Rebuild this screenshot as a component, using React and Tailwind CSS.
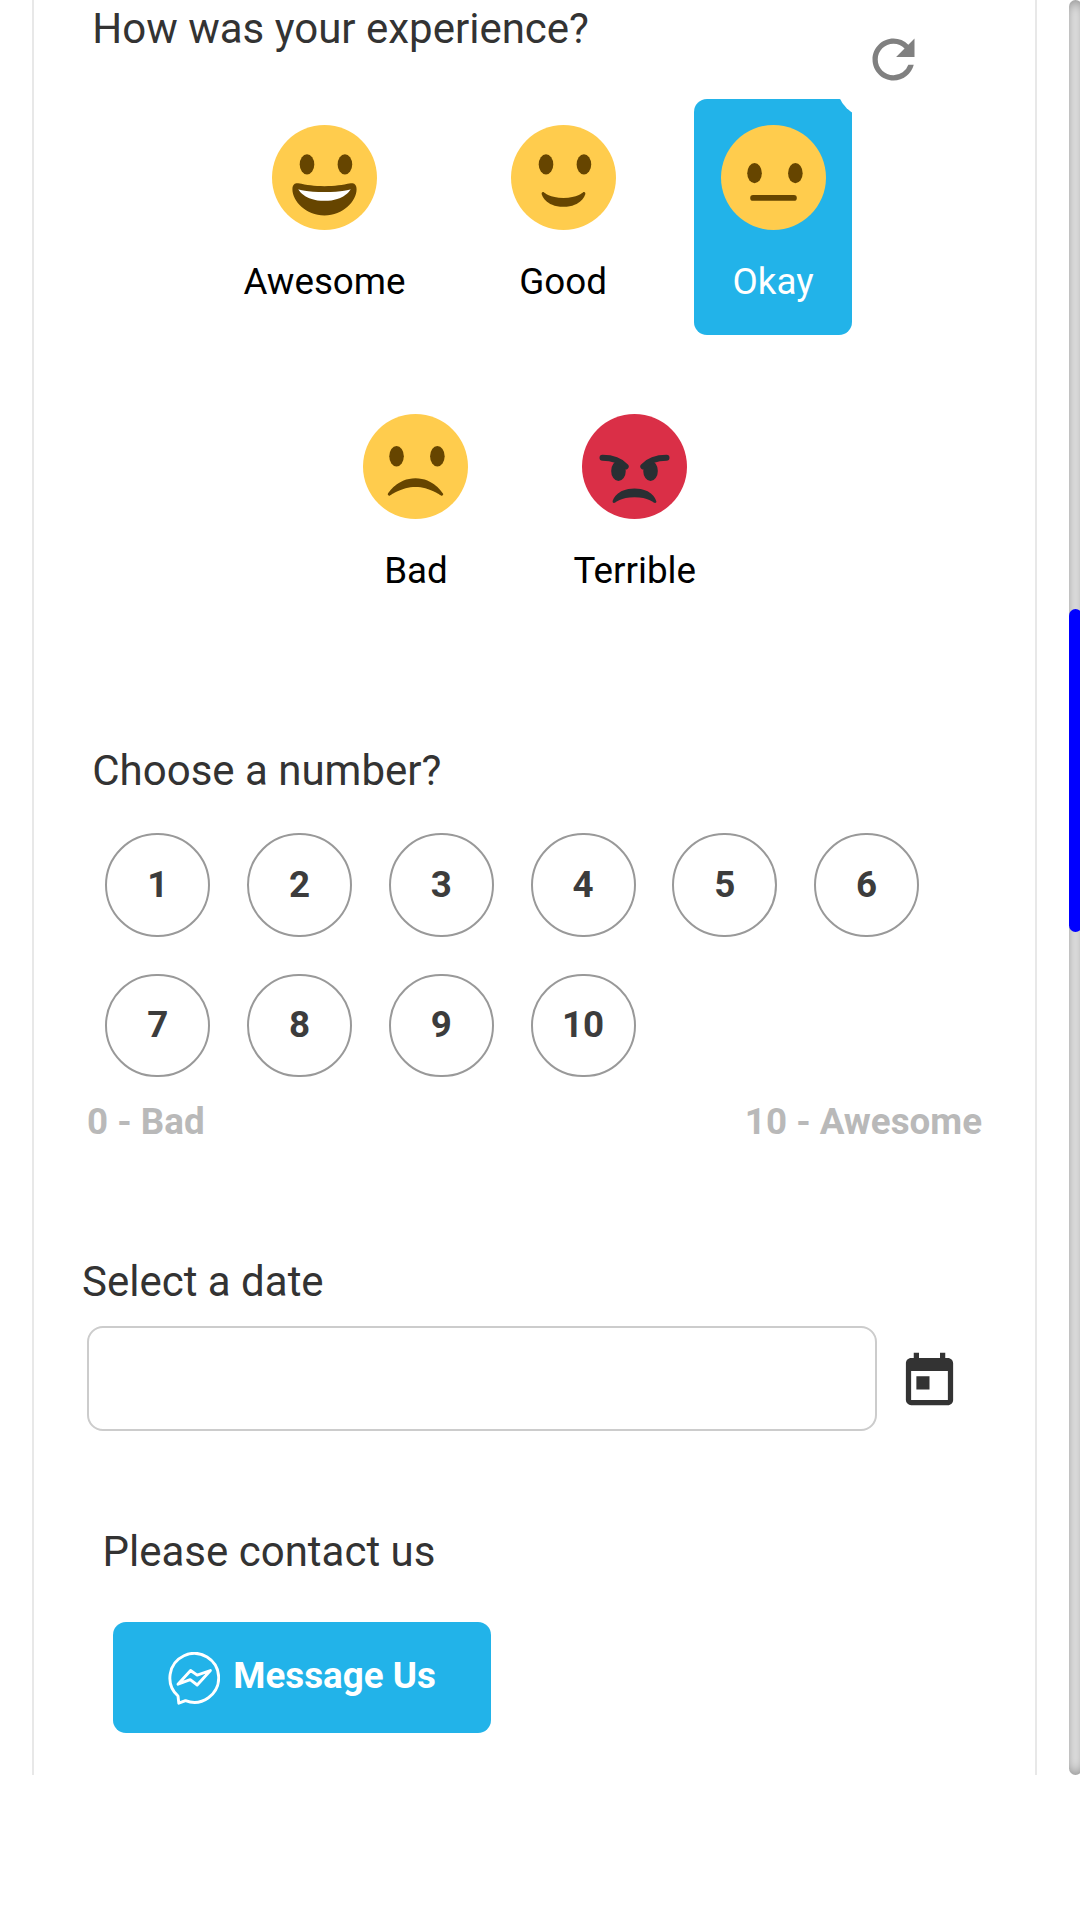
import { MdRefresh, MdToday } from "react-icons/md";

const CLASSIC_EYES = (
  <g fill="#664500">
    <ellipse cx="12" cy="13.5" rx="2.5" ry="3.5" />
    <ellipse cx="25" cy="13.5" rx="2.5" ry="3.5" />
  </g>
);

function Face({ fill = "#ffcc4d", children }) {
  return (
    <svg viewBox="0 0 36 36" className="size-[105px]">
      <circle cx="18" cy="18" r="18" fill={fill} />
      {children}
    </svg>
  );
}

const AwesomeFace = () => (
  <Face>
    {CLASSIC_EYES}
    <path
      fill="#664500"
      d="M18 21c-3.623 0-6.027-.422-9-1-.679-.131-2 0-2 2 0 4 4.595 9 11 9 6.404 0 11-5 11-9 0-2-1.321-2.132-2-2-2.973.578-5.377 1-9 1z"
    />
    <path fill="#fff" d="M9 22s3 1 9 1 9-1 9-1-2 4-9 4-9-4-9-4z" />
  </Face>
);

const GoodFace = () => (
  <Face>
    {CLASSIC_EYES}
    <path
      fill="#664500"
      d="M10.515 23.621C10.56 23.8 11.683 28 18 28c6.318 0 7.44-4.2 7.485-4.379.055-.217-.043-.442-.237-.554-.195-.111-.439-.078-.6.077C24.629 23.163 22.694 25 18 25s-6.63-1.837-6.648-1.855C11.256 23.05 11.128 23 11 23c-.084 0-.169.021-.246.064-.196.112-.294.339-.239.557z"
    />
  </Face>
);

const OkayFace = () => (
  <Face>
    <g fill="#664500">
      <ellipse cx="11.5" cy="16.5" rx="2.5" ry="3.5" />
      <ellipse cx="25.5" cy="16.5" rx="2.5" ry="3.5" />
      <rect x="10" y="24" width="16" height="2" rx="1" />
    </g>
  </Face>
);

const BadFace = () => (
  <Face>
    <g fill="#664500">
      <ellipse cx="11.5" cy="14.5" rx="2.5" ry="3.5" />
      <ellipse cx="25.5" cy="14.5" rx="2.5" ry="3.5" />
      <path d="M8.665 27.871c.178.161.444.171.635.029.039-.029 3.922-2.9 8.7-2.9 4.766 0 8.662 2.871 8.7 2.9.191.142.457.13.635-.029.177-.16.217-.424.094-.628C27.3 27.029 24.212 22 18 22s-9.301 5.028-9.429 5.243c-.123.205-.084.468.094.628z" />
    </g>
  </Face>
);

const TerribleFace = () => (
  <Face fill="#da2f47">
    <g fill="#292f33">
      <ellipse cx="12.5" cy="19.5" rx="2.5" ry="3.5" />
      <ellipse cx="23.5" cy="19.5" rx="2.5" ry="3.5" />
      <path d="M25.485 29.879C25.44 29.7 24.317 25.5 18 25.5c-6.318 0-7.44 4.2-7.485 4.379-.055.217.043.442.237.554.195.111.439.078.6-.077.019-.019 1.954-1.856 6.648-1.856s6.63 1.837 6.648 1.855c.096.095.224.145.352.145.084 0 .169-.021.246-.064.196-.112.294-.339.239-.557z" />
    </g>
    <g fill="none" stroke="#292f33" strokeWidth="2" strokeLinecap="round">
      <path d="M7 15c3 0 6.2 1 8 3" />
      <path d="M29 15c-3 0-6.2 1-8 3" />
    </g>
  </Face>
);

function Option({ face, label, selected = false }) {
  return (
    <div
      className={
        "flex h-[236px] flex-col items-center rounded-[13px] px-[26.25px] pt-[26px] text-[36.75px] leading-[44px] " +
        (selected ? "bg-[#22b3e9] text-white" : "text-black")
      }
    >
      {face}
      <span className="mt-[30px] whitespace-nowrap">{label}</span>
    </div>
  );
}

function Question({ children, className }) {
  return (
    <h2 className={"text-[42px] leading-[48px] font-normal whitespace-nowrap text-[#333] " + className}>
      {children}
    </h2>
  );
}

function MessengerIcon() {
  return (
    <svg
      viewBox="0 0 52 54"
      className="mt-[3px] h-[54px] w-[52px]"
      fill="none"
      stroke="#fff"
      strokeWidth="2.9"
      strokeLinejoin="round"
      strokeLinecap="round"
    >
      <path d="M10 44A24.4 24.4 0 1 1 17.5 48.6L10.8 51.2Z" />
      <path d="M10 32.2 22.6 18.5l6.6 4.6L42.4 18.5 29.2 33l-7-5.4Z" />
    </svg>
  );
}

const NUMBER_ROWS = [
  { numbers: [1, 2, 3, 4, 5, 6], size: "h-[104px]" },
  { numbers: [7, 8, 9, 10], size: "h-[103px] pb-[1px]" },
];

export default function App() {
  return (
    <div className="flex h-[1920px] w-[1080px] items-start overflow-hidden bg-white font-['Roboto',sans-serif]">
      <main className="relative ml-[32px] h-[1775px] w-[1005px] shrink-0 border-x-2 border-[#e8e8e8]">
        <Question className="mt-[5px] ml-[58.25px]">How was your experience?</Question>

        <section className="mt-[46px] flex flex-col gap-[53px]">
          <div className="ml-[183.15px] flex gap-[52.5px]">
            <Option face={<AwesomeFace />} label="Awesome" />
            <Option face={<GoodFace />} label="Good" />
            <Option face={<OkayFace />} label="Okay" selected />
          </div>
          <div className="ml-[303.2px] flex gap-[52.5px]">
            <Option face={<BadFace />} label="Bad" />
            <Option face={<TerribleFace />} label="Terrible" />
          </div>
        </section>

        <button
          aria-label="Reset"
          className="absolute top-0 left-[803px] flex h-[118px] w-[113px] items-center justify-center rounded-[33px] bg-white"
        >
          <MdRefresh className="size-[63px] text-[#808080]" />
        </button>

        <Question className="mt-[123px] ml-[58.25px]">Choose a number?</Question>
        <div className="mt-[38px] ml-[71.25px] flex flex-col gap-[37px]">
          {NUMBER_ROWS.map(({ numbers, size }) => (
            <div key={numbers[0]} className="flex gap-[36.75px]">
              {numbers.map((n) => (
                <button
                  key={n}
                  className={
                    "flex w-[105px] items-center justify-center rounded-full border-2 border-[#999] text-[36.75px] leading-[44px] font-bold text-[#3c3c3c] " +
                    size
                  }
                >
                  {n}
                </button>
              ))}
            </div>
          ))}
        </div>
        <div className="mt-[23px] mr-[53px] ml-[53px] flex justify-between text-[36.75px] leading-[44px] font-bold text-[#b9b9b9]">
          <span>0 - Bad</span>
          <span>10 - Awesome</span>
        </div>

        <Question className="mt-[114px] ml-[48px]">Select a date</Question>
        <div className="mt-[20px] ml-[53px] flex items-center gap-[21px]">
          <input
            aria-label="Date"
            className="h-[105px] w-[790px] rounded-[16px] border-2 border-[#ccc] bg-white"
          />
          <MdToday className="mt-[5px] size-[63px] text-[#333]" />
        </div>

        <Question className="mt-[97px] ml-[68.5px]">Please contact us</Question>
        <button className="mt-[46px] ml-[79px] flex h-[111px] w-[378px] items-center rounded-[13px] bg-[#22b3e9] pl-[55px] text-[36.75px] leading-[44px] font-bold text-white">
          <MessengerIcon />
          <span className="mb-[4px] ml-[13.3px] whitespace-nowrap">Message Us</span>
        </button>
      </main>

      <div className="ml-[32px] h-[1775px] w-[13px] shrink-0 overflow-hidden rounded-full bg-white pt-[609px] shadow-[inset_0_0_13px_#808080]">
        <div className="h-[323px] w-full rounded-full bg-[#0000ff]" />
      </div>
    </div>
  );
}
